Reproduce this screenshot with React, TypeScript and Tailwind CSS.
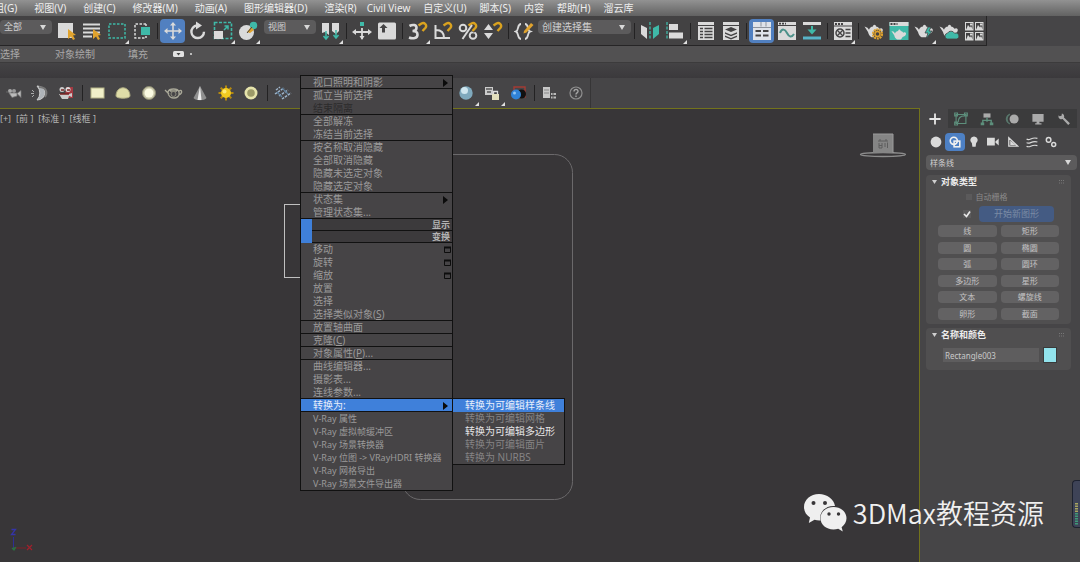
import type { ReactNode } from "react";

const W = "#dadada";
const T = "#3fb9a8";
const Y = "#e0a32e";
const D = "#444344";

type Art = ReactNode;

function Icon({ children, size = "size-5" }: { children: Art; size?: string }) {
  return (
    <svg viewBox="0 0 20 20" className={`${size} shrink-0`} fill="none" aria-hidden="true">
      {children}
    </svg>
  );
}

const magnet = (
  <>
    <path d="M10 4.500l3-2a3.300 3.300 0 0 1 4.600 4.600L14.500 10.500" stroke={D} strokeWidth="4" />
    <path d="M10.500 4.500l3-2a3 3 0 0 1 4 4.300L14.500 10" stroke="#d9a21f" strokeWidth="2.400" />
  </>
);
const teapot = (
  <path
    d="M0.500 5.500l3 1.200 1.500 2c.6-2 2-3 4-3.200 0-1 .6-1.700 1.500-1.700s1.500.7 1.500 1.700c1.600.2 2.800 1 3.500 2.300 2-1.300 3.800 0 3.200 2-.5 1.800-2 2.900-4.200 3.400-.6 1.500-1.500 2.400-2.500 3H7.500c-2-1.200-3-3-3.500-5.200z"
    fill={W}
  />
);

const I = {
  select: (
    <>
      <rect x="1" y="2" width="15" height="15" fill={W} />
      <path d="M11 8l8 6-3 .5 2 3.500-2 1-2-3.500-3 2.500z" fill={Y} />
    </>
  ),
  byName: (
    <>
      <path d="M1 3.500h17M1 7.500h17M1 11.500h17M1 15.500h9" stroke={W} strokeWidth="2.200" />
      <path d="M11 8l8 6-3 .5 2 3.500-2 1-2-3.500-3 2.500z" fill={Y} />
    </>
  ),
  region: <rect x="2" y="3" width="16" height="14" stroke={T} strokeWidth="1.500" strokeDasharray="2.500 1.500" />,
  crossing: (
    <>
      <path d="M14 3H3v14h11v-2M14 3v2" stroke={W} strokeWidth="1.500" strokeDasharray="2.500 1.500" />
      <rect x="9" y="6" width="9" height="8" fill={T} />
    </>
  ),
  move: (
    <path
      d="M10 1l3 3.500h-2.200v4.700h4.700V7L19 10l-3.500 3v-2.200h-4.700v4.700H13L10 19l-3-3.500h2.200v-4.700H4.500V13L1 10l3.500-3v2.200h4.700V4.500H7z"
      fill={W}
    />
  ),
  rotate: (
    <>
      <path d="M9 4.500a6.300 6.300 0 1 0 7 6.200" stroke={W} strokeWidth="2.400" />
      <path d="M8 0.500l6 4-6 4z" fill={W} />
    </>
  ),
  scale: (
    <>
      <rect x="1.500" y="1.500" width="17" height="16" stroke={T} strokeWidth="1.600" strokeDasharray="3 1.500" />
      <rect x="1" y="10" width="9" height="8" fill={W} />
      <path d="M11 9l4-4m0 3.500V5h-3.500" stroke={T} strokeWidth="1.500" />
    </>
  ),
  place: (
    <>
      <circle cx="8.500" cy="11.500" r="7.500" fill={W} />
      <circle cx="15.500" cy="4.500" r="3.700" fill={T} />
      <path d="M9 11l4-5 3 3-4 3z" fill={Y} />
      <path d="M9 12l5-6" stroke={D} strokeWidth="1" />
    </>
  ),
  pivot: (
    <>
      <path d="M1 2h7v12l-4-3-3 1zM11 2h7v8l-3 3-4-3z" fill={W} />
      <path d="M5 10v8m-2.500-3L5 18l2.500-3M15 9v8m-2.500-3L15 17l2.500-3" stroke={T} strokeWidth="1.500" />
    </>
  ),
  manipulate: (
    <>
      <path d="M10 7v11M2 11h16" stroke={W} strokeWidth="1.800" />
      <path d="M4 8l-4 3 4 3zM16 8l4 3-4 3zM7.500 15h5L10 19z" fill={W} />
      <rect x="8" y="1" width="4" height="4" fill={T} />
    </>
  ),
  keyboard: (
    <>
      <rect x="1" y="1.500" width="18" height="17" rx="1.500" fill={W} />
      <path d="M6.500 3l4 4H8v4.500H5V7H2.500z" fill={D} />
    </>
  ),
  snap3: (
    <>
      <path d="M1.500 5c3.500-2 7-1 7 1.700S6.500 10 4.500 10c3 0 5 1.300 5 3.700 0 3.500-4.500 4.400-8.500 2.800" stroke={W} strokeWidth="2.600" />
      {magnet}
    </>
  ),
  angle: (
    <>
      <path d="M2.500 4v13H17M3 9c5 0 8 3 8 8" stroke={W} strokeWidth="2" />
      {magnet}
    </>
  ),
  percent: (
    <>
      <circle cx="5" cy="7" r="3.300" stroke={W} strokeWidth="2" />
      <circle cx="15" cy="14.500" r="3.300" stroke={W} strokeWidth="2" />
      {magnet}
      <path d="M4.500 18L14 4" stroke={W} strokeWidth="2" />
    </>
  ),
  spinner: (
    <>
      <path d="M1 9l4.500-6L10 9zM1 12h9l-4.500 6z" fill={W} />
      {magnet}
    </>
  ),
  namedSets: (
    <>
      <path d="M7 3C3 3 5 9.500 2 10.500c3 1 1 7.500 5 7.500M11 3c4 0 2 6.500 5 7.500-3 1-1 7.500-5 7.500" stroke={W} strokeWidth="1.900" />
      <path d="M10 10l7-8 2.500 2-7 7.500-3 1z" fill={Y} />
    </>
  ),
  mirror: (
    <>
      <path d="M1 4l6 3v11l-6-5z" fill={W} />
      <path d="M13 7l6-3v9l-6 5z" fill={T} />
      <path d="M10 1v18" stroke={T} strokeWidth="1.300" strokeDasharray="3 1.500" />
    </>
  ),
  align: (
    <>
      <path d="M2 1v18" stroke={T} strokeWidth="1.300" strokeDasharray="3 1.500" />
      <rect x="4" y="3" width="9" height="6" fill={W} />
      <rect x="4" y="11.500" width="14" height="6" fill={W} />
    </>
  ),
  scene: (
    <>
      <rect x="2" y="1" width="16" height="18" fill={W} />
      <path d="M2 4.500h16" stroke={D} />
      <path d="M4 7.500h3m1.500 0h8M4 10.500h3m1.500 0h8M4 13.500h3m1.500 0h8M4 16.500h3m1.500 0h8" stroke={D} strokeWidth="1.500" />
    </>
  ),
  layers: (
    <>
      <rect x="2" y="1" width="16" height="18" fill={W} />
      <path d="M2 4.500h16" stroke={D} />
      <path d="M10 6l6 2.500-6 2.500-6-2.500zM4 11.200l6 2.500 6-2.500v1.600l-6 2.500-6-2.500zM4 14.400l6 2.500 6-2.500V16l-6 2.500L4 16z" fill={D} />
    </>
  ),
  ribbon: (
    <>
      <rect x="1" y="1" width="18" height="18" fill="#dfe3ea" />
      <path d="M1 6.500h18M9 1v4.500M14 1v4.500" stroke="#8d939d" />
      <path d="M3.500 10h5.500m2 0h5.500M3.500 14.500h5.500m2 0h5.500" stroke={D} strokeWidth="2" />
    </>
  ),
  curve: (
    <>
      <rect x="1" y="1" width="18" height="18" fill={W} />
      <path d="M1 4.500h18" stroke={D} />
      <path d="M2 2.700h7" stroke={D} strokeWidth="1.800" strokeDasharray="2 1" />
      <path d="M3 12c2-5 5-4 7 0s4.500 5 7 1" stroke="#4c9189" strokeWidth="2" />
    </>
  ),
  schematic: (
    <>
      <rect x="1" y="1" width="18" height="3" fill={W} />
      <rect x="1" y="15.500" width="18" height="3" fill="#58b4c8" />
      <path d="M10 5v4" stroke={T} strokeWidth="2" />
      <path d="M5.500 8.500h9L10 13.500z" fill={T} />
    </>
  ),
  material: (
    <>
      <rect x="1" y="1" width="18" height="18" fill={W} />
      <path d="M1 5h18" stroke={D} />
      <path d="M2 3h9" stroke={D} strokeWidth="1.800" strokeDasharray="2 1" />
      <circle cx="7" cy="12" r="4" stroke={D} strokeWidth="1.500" />
      <path d="M4 9l6 6M10 9l-6 6M12.500 8.500h5M12.500 12h5M12.500 15.500h5" stroke={D} strokeWidth="1.400" />
    </>
  ),
  renderSetup: (
    <>
      {teapot}
      <circle cx="13.500" cy="13" r="4.500" fill={D} stroke={Y} strokeWidth="2.200" strokeDasharray="2 .8" />
      <circle cx="13.500" cy="13" r="2.500" stroke={Y} strokeWidth="1.500" />
    </>
  ),
  frame: (
    <>
      <rect x="0.500" y="1" width="19" height="18" fill={T} />
      <rect x="0.500" y="1" width="19" height="4" fill={W} />
      <path d="M1.500 3h7" stroke={D} strokeWidth="1.800" strokeDasharray="2 1" />
      <g transform="translate(2 5.500) scale(.8)">{teapot}</g>
    </>
  ),
  render: (
    <>
      {teapot}
      <path d="M14 6l-3 6h3l-2 6 6-8h-3l2-4z" fill={T} stroke={D} strokeWidth=".8" />
    </>
  ),
  cloud: (
    <>
      {teapot}
      <path d="M8 18a3 3 0 0 1 .5-5.800 4 4 0 0 1 7 0A3 3 0 0 1 18 18z" fill={T} stroke={D} strokeWidth=".8" />
    </>
  ),
  gallery: (
    <>
      {[1, 11].map((y) =>
        [1, 11].map((x) => (
          <g key={`${x}-${y}`} transform={`translate(${x} ${y})`}>
            <rect x=".5" y=".5" width="7.500" height="7.500" stroke={W} />
            <path d="M1 8l2-5 2 2.500L6 4l2 4zM5 1.500h2.500v2H5z" fill={W} />
          </g>
        )),
      )}
    </>
  ),
};

const L = {
  camera: (
    <>
      <circle cx="6" cy="8" r="2" fill="#aaa" />
      <circle cx="10" cy="8" r="2" fill="#999" />
      <path d="M5 10h8v3l-5 1.500zM13 10.500l4-3v7zM2 9h3" fill="#bbb" stroke="#777" strokeWidth=".7" />
    </>
  ),
  contrast: (
    <>
      <path d="M7 3a8 7 0 0 1 0 14 10 10 0 0 0 0-14z" fill="#aeb3b8" stroke="#ccc" />
      <path d="M9 4c7 0 9 5 6 10" stroke="#777" strokeWidth="2" />
      <path d="M2 7l2 2M1 10.500h3M2 14l2-2" stroke="#aaa" />
    </>
  ),
  redCamera: (
    <>
      <path d="M10 4h7v11H9z" fill="#a43a42" />
      <circle cx="6" cy="6.500" r="2.500" fill="#ccc" />
      <circle cx="12" cy="6.500" r="2.500" fill="#ddd" />
      <path d="M3 11h10l3-1v4l-3-1-1 3H6z" fill="#ccc" />
      <path d="M4 11h9M5 7h3m3 0h3" stroke="#722" strokeWidth="1.300" />
    </>
  ),
  plane: <rect x="3" y="5" width="13" height="10" fill="#f1f0c9" stroke="#b6b58a" />,
  dome: <path d="M3 13c0-11 14-11 14 0 0 3-14 3-14 0z" fill="#dfdda8" stroke="#aaa880" />,
  sphere: (
    <>
      <circle cx="10" cy="10" r="6.500" fill="#c9c8aa" stroke="#8c8b72" />
      <circle cx="10" cy="10" r="4.500" fill="#fafae2" />
    </>
  ),
  mesh: (
    <>
      <path d="M4 9c1-4 10-4 11 0 1 5-3 6-5 6s-6-1-6-6zM1 7l4 4M15 8c3-2 4 2 0 4M6 8h7" stroke="#a9a898" strokeWidth="1.300" />
      <circle cx="9.500" cy="11" r="2.500" stroke="#8c8b7d" />
    </>
  ),
  cone: (
    <>
      <path d="M10 3l6.500 12c-2 3-11 3-13 0z" fill="#8f8f8f" />
      <path d="M10 3l1.500 14h-4z" fill="#ededed" />
    </>
  ),
  sun: (
    <>
      <path d="M10 2.500v15M2.500 10h15M4.700 4.700l10.600 10.600M15.300 4.700L4.700 15.300" stroke="#b4880e" strokeWidth="2" />
      <circle cx="10" cy="10" r="5" fill="#f2cb20" />
      <circle cx="8.500" cy="8.500" r="2" fill="#ffec75" />
    </>
  ),
  ring: (
    <>
      <circle cx="10" cy="10" r="6.500" fill="#e6e4ac" />
      <circle cx="10" cy="10" r="3.800" fill="#9c9a68" />
    </>
  ),
  rain: (
    <>
      <path d="M3 7l4-3M2 11l9-6M6 13l9-6M9 16l9-6" stroke="#9fb6cc" strokeWidth="1.500" strokeDasharray="2.500 1" />
      <path d="M4 9l5 5M9 5l6 6" stroke="#5e7f9c" strokeWidth="1.200" />
    </>
  ),
  ball: (
    <>
      <circle cx="10" cy="10" r="6.700" fill="#7fa9bd" />
      <circle cx="8.500" cy="7.500" r="3.500" fill="#cfe6ef" />
    </>
  ),
  lock: (
    <>
      <rect x="3" y="4" width="8" height="8" fill="#ccc" />
      <path d="M4 6h6M5 9h4" stroke="#555" strokeWidth="1.300" />
      <rect x="10" y="11" width="7" height="6" fill="#e3dfbd" />
      <path d="M11.500 11V8.500h4V11" stroke="#ddd" strokeWidth="1.300" />
    </>
  ),
  red: (
    <>
      <path d="M6 4h11v10H6z" stroke="#a33b34" strokeWidth="1.400" />
      <circle cx="13.500" cy="11" r="4.500" fill="#111" />
      <circle cx="8" cy="11.500" r="5" fill="#2f82d6" />
      <circle cx="6.500" cy="10" r="1.500" fill="#8ec5f5" />
    </>
  ),
  list: (
    <>
      <rect x="3" y="4" width="7" height="11" fill="#c8c8c8" />
      <path d="M4 7h5M4 10h5" stroke="#888" />
      <path d="M11 11h5M11 14.500h5" stroke="#bbb" strokeWidth="2" />
      <path d="M13 10v6" stroke="#555" />
    </>
  ),
  help: (
    <>
      <circle cx="10" cy="10" r="6" stroke="#8f8f8f" strokeWidth="1.200" />
      <path d="M8 8.500c0-3 4.300-2.600 4 0-.2 1.500-2 1.400-2 3M10 12.500v1.500" stroke="#a5a5a5" strokeWidth="1.400" />
    </>
  ),
};

function Tool({ name, art, active, flyout }: { name: string; art: Art; active?: boolean; flyout?: boolean }) {
  return (
    <button
      aria-label={name}
      className={
        active
          ? "relative flex h-6 w-[25px] shrink-0 items-center justify-center rounded-sm bg-[#5180c0]"
          : "relative flex h-6 w-[25px] shrink-0 items-center justify-center"
      }
    >
      <Icon>{art}</Icon>
      {flyout && (
        <svg viewBox="0 0 4 4" className="absolute -bottom-px right-0 size-1" aria-hidden="true">
          <path d="M4 0v4H0z" fill="#e0e0e0" />
        </svg>
      )}
    </button>
  );
}

function Sep() {
  return (
    <span className="flex h-4 w-1.5 shrink-0 justify-center" role="separator">
      <span className="w-px bg-[#232223]" />
    </span>
  );
}

function Combo({ label, value, className }: { label: string; value: string; className: string }) {
  return (
    <span className={`relative flex shrink-0 items-center rounded-sm bg-[#5c5b5c] ${className}`}>
      <select aria-label={label} className="size-full appearance-none bg-transparent pl-1 text-[#cfcfcf] outline-none">
        <option>{value}</option>
      </select>
      <svg viewBox="0 0 6 5" className="pointer-events-none absolute right-1.5 h-[5px] w-1.5" aria-hidden="true">
        <path d="M0 0h6L3 5z" fill="#d8d8d8" />
      </svg>
    </span>
  );
}

const menuBar = [
  ["组(G)", "视图(V)", "创建(C)", "修改器(M)", "动画(A)", "图形编辑器(D)", "渲染(R)"],
  ["Civil View", "自定义(U)", "脚本(S)", "内容", "帮助(H)", "溜云库"],
];

type Item = { text: string; key?: string; tail?: string; arrow?: boolean; box?: boolean; off?: boolean; on?: boolean };

const upper: Item[][] = [
  [{ text: "视口照明和阴影", arrow: true }],
  [{ text: "孤立当前选择" }, { text: "结束隔离", off: true }],
  [{ text: "全部解冻" }, { text: "冻结当前选择" }],
  [{ text: "按名称取消隐藏" }, { text: "全部取消隐藏" }, { text: "隐藏未选定对象" }, { text: "隐藏选定对象" }],
  [{ text: "状态集", arrow: true }, { text: "管理状态集..." }],
];

const lower: Item[][] = [
  [
    { text: "移动", box: true },
    { text: "旋转", box: true },
    { text: "缩放", box: true },
    { text: "放置" },
    { text: "选择" },
    { text: "选择类似对象(", key: "S", tail: ")" },
  ],
  [{ text: "放置轴曲面" }],
  [{ text: "克隆(", key: "C", tail: ")" }],
  [{ text: "对象属性(", key: "P", tail: ")..." }],
  [{ text: "曲线编辑器..." }, { text: "摄影表..." }, { text: "连线参数..." }],
  [{ text: "转换为:", arrow: true, on: true }],
];

const vray: Item[] = [
  { text: "V-Ray 属性" },
  { text: "V-Ray 虚拟帧缓冲区" },
  { text: "V-Ray 场景转换器" },
  { text: "V-Ray 位图 -> VRayHDRI 转换器" },
  { text: "V-Ray 网格导出" },
  { text: "V-Ray 场景文件导出器" },
];

function MenuItem({ item }: { item: Item }) {
  const tone = item.on ? "bg-[#3f80da] text-[#e8eefa]" : item.off ? "text-[#2c2b2c]" : "text-[#9b9a9a]";
  return (
    <button role="menuitem" disabled={item.off} className={`flex h-[13px] w-full items-center justify-between pr-1 pl-3 ${tone}`}>
      <span className="whitespace-nowrap">
        {item.text}
        {item.key && <u>{item.key}</u>}
        {item.tail}
      </span>
      {item.arrow && (
        <svg viewBox="0 0 5 8" className="h-2 w-[5px]" aria-hidden="true">
          <path d="M0 0l5 4-5 4z" fill="#0b0b0b" />
        </svg>
      )}
      {item.box && (
        <svg viewBox="0 0 8 8" className="-mr-1 size-2" aria-hidden="true">
          <path d="M.5 1.500h6v5h-6z" fill="none" stroke="#0d0d0d" />
          <path d="M0 1.500h7" stroke="#0d0d0d" strokeWidth="2" />
        </svg>
      )}
    </button>
  );
}

function MenuGroup({ items, className = "" }: { items: Item[]; className?: string }) {
  return (
    <div role="group" className={`shadow-[0_-1px_0_#111] ${className}`}>
      {items.map((item) => (
        <MenuItem key={item.text} item={item} />
      ))}
    </div>
  );
}

function QuadTitle({ text }: { text: string }) {
  return (
    <div className="flex h-3 items-stretch justify-between bg-[#3c3a3c] leading-3 text-[#b4b4b4] shadow-[0_-1px_0_#111]">
      <span className="w-[11px] bg-[#3f80da]" />
      <span className="pr-0.5 text-[9px] font-bold">{text}</span>
    </div>
  );
}

const convert = [
  ["转换为可编辑样条线", "bg-[#3f80da] text-[#e8eefa]"],
  ["转换为可编辑网格", "text-[#858384]"],
  ["转换为可编辑多边形", "text-[#e6e6e6]"],
  ["转换为可编辑面片", "text-[#858384]"],
  ["转换为 NURBS", "text-[#858384]"],
];

function ContextMenu() {
  return (
    <div className="absolute top-[76px] left-[301px] z-10 flex items-start text-[10px] leading-[13px]">
      <div role="menu" className="w-[151px] bg-[#464446] outline outline-[#111]">
        {upper.map((g) => (
          <MenuGroup key={g[0].text} items={g} />
        ))}
        <QuadTitle text="显示" />
        <QuadTitle text="变换" />
        {lower.map((g) => (
          <MenuGroup key={g[0].text} items={g} />
        ))}
        <MenuGroup items={vray} className="text-[9px]" />
      </div>
      <div role="menu" className="mt-[323px] ml-px w-[111px] bg-[#464446] outline outline-[#111]">
        {convert.map(([text, tone]) => (
          <button key={text} role="menuitem" className={`block h-[13px] w-full pl-3 text-left whitespace-nowrap ${tone}`}>
            {text}
          </button>
        ))}
      </div>
    </div>
  );
}

const tabs: [string, Art][] = [
  ["创建", <path d="M10 2v16M2 10h16" stroke="#e6e6e6" strokeWidth="2.600" />],
  ["修改", <path d="M3 3.500h14v13H3zM1 1.500h4v4H1zM15 1.500h4v4h-4zM1 14.500h4v4H1zM6 14.500c0-6 3-9 9-9" stroke="#5d8f7c" strokeWidth="1.600" />],
  [
    "层次",
    <>
      <path d="M5 2h10v6H5z" fill="#aaa" />
      <path d="M10 8v6M4 16v-4h12v4" stroke="#5d8f7c" strokeWidth="2" />
      <path d="M1 15h5v4H1zM14 15h5v4h-5z" fill="#5d8f7c" />
    </>,
  ],
  [
    "运动",
    <>
      <circle cx="13" cy="10" r="6.500" fill="#aaa" />
      <path d="M7 3a8 8 0 0 0 0 14M4 5a8 8 0 0 0 0 10" stroke="#58766b" strokeWidth="1.800" />
    </>,
  ],
  ["显示", <path d="M2 3h16v11h-6v2h3v2H6v-2h2v-2H2z" fill="#aaa" />],
  [
    "实用程序",
    <path d="M7 2l-.5 3.500-3 .5-1-1.500C1 8 4 11 8 10l8 8.500 2.500-2.500-8.500-8C11 5 9.500 2.500 7 2z" fill="#aaa" />,
  ],
];

const kinds: [string, Art][] = [
  ["几何体", <circle cx="10" cy="10" r="9" fill={W} />],
  [
    "图形",
    <>
      <circle cx="8" cy="8" r="6" stroke="#f0f0f0" strokeWidth="2.600" />
      <rect x="8.500" y="8.500" width="9.500" height="9.500" stroke="#f0f0f0" strokeWidth="2.600" />
    </>,
  ],
  ["灯光", <path d="M10 1a6 6 0 0 1 3.500 11l-.8 6H7.300l-.8-6A6 6 0 0 1 10 1z" fill={W} />],
  ["摄影机", <path d="M0 3h13v13H0zM14 9l5.500-5v12L14 11z" fill={W} />],
  ["辅助对象", <path d="M3 3v14h15zM6.500 10v4h4.500z" stroke={W} strokeWidth="2.200" />],
  ["空间扭曲", <path d="M1 5c5 4 8-4 18-1M1 11c5 4 8-4 18-1M1 17c5 4 8-4 18-1" stroke={W} strokeWidth="1.900" />],
  [
    "系统",
    <>
      <circle cx="6" cy="6.500" r="3.800" stroke={W} strokeWidth="2.500" />
      <circle cx="14.500" cy="14" r="3.300" stroke={W} strokeWidth="2.500" />
    </>,
  ],
];

const shapes = ["线", "矩形", "圆", "椭圆", "弧", "圆环", "多边形", "星形", "文本", "螺旋线", "卵形", "截面"];

function RollTitle({ text }: { text: string }) {
  return (
    <h2 className="flex h-3.5 items-center gap-1 px-1.5 text-[9px] font-bold text-[#ececec]">
      <svg viewBox="0 0 5 4" className="h-1 w-[5px]" aria-hidden="true">
        <path d="M0 0h5L2.500 4z" fill="#cfcfcf" />
      </svg>
      {text}
      <svg viewBox="0 0 6 4" className="ml-auto h-1 w-1.5" aria-hidden="true">
        <path d="M0 .5h6M0 3h6" stroke="#777" strokeDasharray="1 1" />
      </svg>
    </h2>
  );
}

function CommandPanel() {
  return (
    <aside className="flex w-40 shrink-0 flex-col pt-px pr-[3px] pl-1.5 text-[8px]">
      <div className="-ml-1 grid h-[19px] grid-cols-6 items-center">
        {tabs.map(([name, art], i) => (
          <button
            key={name}
            aria-label={name}
            className={i ? "flex h-[19px] items-center justify-center bg-[#3b3b3c]" : "flex h-[19px] items-center justify-center"}
          >
            <Icon size="size-3.5">{art}</Icon>
          </button>
        ))}
      </div>
      <div className="mt-[5px] grid w-[135px] grid-cols-7">
        {kinds.map(([name, art], i) => (
          <button
            key={name}
            aria-label={name}
            className={i === 1 ? "flex h-[18px] items-center justify-center rounded-sm bg-[#4d80c4]" : "flex h-[18px] items-center justify-center"}
          >
            <Icon size="size-3">{art}</Icon>
          </button>
        ))}
      </div>
      <Combo label="类别" value="样条线" className="mt-1 h-[15px] w-full" />
      <section className="mt-[5px] mr-1.5 rounded-sm bg-[#504f50] pb-1">
        <RollTitle text="对象类型" />
        <label className="mt-px flex h-3.5 items-center justify-center gap-1 pr-6 text-[#8b8a8a]">
          <input type="checkbox" disabled className="size-1.5 appearance-none bg-[#5b5a5b]" />
          自动栅格
        </label>
        <div className="mt-0.5 flex items-center justify-end gap-2 pr-[17px]">
          <label className="relative flex size-2 items-center">
            <input type="checkbox" defaultChecked aria-label="开始新图形" className="size-2 appearance-none bg-[#5b5a5b]" />
            <svg viewBox="0 0 8 8" className="pointer-events-none absolute inset-0" fill="none" aria-hidden="true">
              <path d="M1 4l2.500 2.500L7 1.500" stroke="#e8e8e8" strokeWidth="1.700" />
            </svg>
          </label>
          <button className="h-4 w-[75px] rounded-sm bg-[#445b83] text-[9px] leading-4 text-[#7b8ba5]">开始新图形</button>
        </div>
        <div className="mt-[3px] grid h-[95px] grid-cols-2 content-between gap-x-1 px-3">
          {shapes.map((s) => (
            <button key={s} className="h-3 rounded-sm bg-[#636263] leading-3 text-[#c4c3c3]">
              {s}
            </button>
          ))}
        </div>
      </section>
      <section className="mt-1 mr-1.5 rounded-sm bg-[#504f50] pb-2">
        <RollTitle text="名称和颜色" />
        <div className="mt-1.5 flex items-center justify-between pr-[15px] pl-[17px]">
          <input
            aria-label="对象名称"
            defaultValue="Rectangle003"
            className="h-3.5 w-24 min-w-0 bg-[#5e5d5e] px-0.5 text-[#c9c9c9] outline-none"
          />
          <button aria-label="对象颜色" className="h-3.5 w-3 bg-[#92e3ec] outline outline-[#3a3a3a]" />
        </div>
      </section>
    </aside>
  );
}

function Viewport() {
  return (
    <main className="relative min-w-0 flex-1 overflow-hidden border-t border-r border-[#73731c] bg-[#383638]">
      <div className="flex gap-[5px] pt-1 text-[9px] leading-3 text-[#b5b5b5]">
        <button>[+]</button>
        <button>[前 ]</button>
        <button>[标准 ]</button>
        <button>[线框 ]</button>
      </div>
      <svg className="absolute top-0 left-0 h-[452px] w-[600px]" fill="none" aria-hidden="true">
        <rect x="402.500" y="45.500" width="170" height="345" rx="18" stroke="#6b696b" />
        <rect x="284.500" y="95.500" width="80" height="73" stroke="#c0c0c0" />
      </svg>
      <svg viewBox="0 0 50 28" className="absolute top-6 right-[11px] h-7 w-[50px]" fill="none" aria-hidden="true">
        <ellipse cx="25" cy="21.500" rx="22.500" ry="2" stroke="#8c8c8c" strokeWidth="1.300" />
        <rect x="15" y="1" width="20" height="19" fill="#858585" />
        <path d="M15 1h20v19" stroke="#9b9b9b" />
        <path d="M20 8h10M22 6v2M28 6v2M21 10v5M24 10v5h-3M21 12.500h3M27 10v4M29.500 9.500v5.500" stroke="#5d5d5d" />
      </svg>
      <svg viewBox="0 0 40 30" className="absolute bottom-1 left-1.5 h-[30px] w-10" fill="none" aria-hidden="true">
        <path d="M7.500 9v13" stroke="#2e2e94" />
        <path d="M5.500 1.500h4l-4 5h4" stroke="#3434a8" strokeWidth="1.300" />
        <path d="M8 20h12" stroke="#7a2028" />
        <path d="M21 17l5 5m0-5l-5 5" stroke="#a0202c" strokeWidth="1.200" />
        <path d="M8 19v3M6 20l2 2 2-3" stroke="#2c7040" strokeWidth="1.200" />
      </svg>
    </main>
  );
}

export default function App() {
  return (
    <div
      lang="zh-CN"
      className="relative flex min-h-screen flex-col overflow-hidden bg-[#464547] font-['Noto_Sans','Noto_Sans_CJK_SC',sans-serif] text-[10px] text-[#d6d6d6]"
    >
      <div className="shrink-0 bg-linear-to-b from-[#929292] to-[#626262] leading-4 text-[#efefef]">
        <nav className="-ml-1.5 flex h-4 items-center gap-2.5">
          {menuBar.map((group, i) => (
            <div key={group[0]} className={i ? "flex gap-[13px]" : "flex gap-[17px]"}>
              {group.map((m) => (
                <button key={m} className="shrink-0 whitespace-nowrap">
                  {m}
                </button>
              ))}
            </div>
          ))}
        </nav>
      </div>

      <div className="flex h-[30px] w-[987px] max-w-full shrink-0 items-center border-r border-b border-[#262526] bg-[#434243]">
        <Combo label="选择过滤器" value="全部" className="mt-1 mr-0.5 h-3.5 w-[52px] self-start text-[9px]" />
        <Tool name="选择对象" art={I.select} />
        <Tool name="按名称选择" art={I.byName} />
        <Tool name="矩形选择区域" art={I.region} flyout />
        <Tool name="窗口/交叉" art={I.crossing} />
        <Sep />
        <Tool name="选择并移动" art={I.move} active />
        <Tool name="选择并旋转" art={I.rotate} />
        <Tool name="选择并缩放" art={I.scale} flyout />
        <Tool name="选择并放置" art={I.place} flyout />
        <Combo label="参考坐标系" value="视图" className="mt-1 mr-0.5 ml-1 h-3.5 w-[52px] self-start text-[9px]" />
        <Tool name="使用轴点中心" art={I.pivot} flyout />
        <Sep />
        <Tool name="选择并操纵" art={I.manipulate} />
        <Tool name="键盘快捷键覆盖" art={I.keyboard} />
        <Sep />
        <Tool name="捕捉开关" art={I.snap3} flyout />
        <Tool name="角度捕捉" art={I.angle} />
        <Tool name="百分比捕捉" art={I.percent} />
        <Tool name="微调器捕捉" art={I.spinner} />
        <Sep />
        <Tool name="编辑命名选择集" art={I.namedSets} />
        <Combo label="命名选择集" value="创建选择集" className="mt-1 ml-0.5 h-3.5 w-[93px] self-start" />
        <Sep />
        <Tool name="镜像" art={I.mirror} />
        <Tool name="对齐" art={I.align} flyout />
        <Sep />
        <Tool name="场景资源管理器" art={I.scene} />
        <Tool name="层资源管理器" art={I.layers} />
        <Sep />
        <Tool name="功能区" art={I.ribbon} active />
        <Tool name="曲线编辑器" art={I.curve} />
        <Tool name="图解视图" art={I.schematic} />
        <Sep />
        <Tool name="材质编辑器" art={I.material} flyout />
        <Sep />
        <Tool name="渲染设置" art={I.renderSetup} />
        <Tool name="渲染帧窗口" art={I.frame} />
        <Tool name="渲染产品" art={I.render} flyout />
        <Tool name="云渲染" art={I.cloud} />
        <Tool name="渲染库" art={I.gallery} />
      </div>

      <div className="flex h-4 shrink-0 items-center bg-[#525152] text-[10px] leading-4 text-[#a9a8a8]">
        <button className="w-[55px] text-left">选择</button>
        <button className="w-[73px] text-left">对象绘制</button>
        <button className="w-[45px] text-left">填充</button>
        <button aria-label="显示选项">
          <svg viewBox="0 0 20 8" className="h-2 w-5" aria-hidden="true">
            <rect y="1" width="11" height="6" rx="1.500" fill="#e2e2e2" />
            <path d="M3.500 3h4l-2 2.500z" fill="#444" />
            <rect x="17" y="3" width="2" height="2" fill="#bbb" />
          </svg>
        </button>
      </div>

      <div className="h-4 shrink-0 border-t border-[#3c3b3c] bg-linear-to-b from-[#444345] to-[#3b393c]" />

      <div className="flex h-[30px] w-[591px] max-w-full shrink-0 items-center border-r border-[#363536] bg-[#464547] pl-px">
        <div className="grid w-[78px] grid-cols-3 justify-items-center">
          <Tool name="摄影机" art={L.camera} />
          <Tool name="曝光" art={L.contrast} />
          <Tool name="物理摄影机" art={L.redCamera} />
        </div>
        <Sep />
        <div className="grid w-[179px] grid-cols-7 justify-items-center">
          <Tool name="平面灯" art={L.plane} />
          <Tool name="穹顶灯" art={L.dome} />
          <Tool name="球体灯" art={L.sphere} />
          <Tool name="网格灯" art={L.mesh} />
          <Tool name="IES 灯" art={L.cone} />
          <Tool name="太阳光" art={L.sun} />
          <Tool name="环境光" art={L.ring} />
        </div>
        <Sep />
        <Tool name="毛发" art={L.rain} />
        <div className="ml-auto grid w-[78px] grid-cols-3 justify-items-center">
          <Tool name="材质球" art={L.ball} flyout />
          <Tool name="锁定" art={L.lock} flyout />
          <Tool name="对象" art={L.red} />
        </div>
        <Sep />
        <div className="mr-px grid w-[52px] grid-cols-2 justify-items-center">
          <Tool name="列表" art={L.list} />
          <Tool name="帮助" art={L.help} />
        </div>
      </div>

      <div className="flex flex-1">
        <Viewport />
        <CommandPanel />
      </div>

      <ContextMenu />

      <div className="absolute right-9 bottom-[30px] z-20 flex items-center gap-1.5 text-[#f0f0f0]">
        <svg viewBox="0 0 43 38" className="h-[38px] w-[43px]" aria-hidden="true">
          <path d="M15 0C6.500 0 0 5.800 0 13c0 4.500 2.200 8 6 10.500L4.800 29l5.700-3.200c2 .6 4 .8 6 .7C14.500 18 22 11 31 12 30 5 23 0 15 0z" fill="#efefef" />
          <path d="M29.500 13C22 13 16.500 18 16.500 24.300S22 35.500 29.500 35.500c1.700 0 3.200-.2 4.700-.7l4.600 2.700-1.200-4.300c3-2.300 4.900-5.300 4.900-8.900C42.500 18 37 13 29.500 13z" fill="#efefef" />
          <g fill="#383638">
            <circle cx="9.500" cy="9" r="2" />
            <circle cx="21" cy="9" r="2" />
            <circle cx="25" cy="20" r="1.700" />
            <circle cx="34.500" cy="20" r="1.700" />
          </g>
        </svg>
        <span className="font-['Noto_Sans_CJK_SC',sans-serif] text-[27px] leading-9 font-[350] whitespace-nowrap">3DMax教程资源</span>
      </div>

      <div className="absolute right-0 bottom-[34px] flex h-12 w-2 flex-col justify-end rounded-l-sm border border-r-0 border-[#1d2230] bg-[#3e4357] p-0.5" aria-hidden="true">
        <svg viewBox="0 0 5 22" className="h-[22px] w-full" preserveAspectRatio="none">
          <path d="M2.500 0v9" stroke="#a8a560" strokeWidth="5" strokeDasharray="1.500 1" />
          <path d="M2.500 10v12" stroke="#3f9a78" strokeWidth="5" strokeDasharray="1.500 1" />
        </svg>
      </div>
    </div>
  );
}
